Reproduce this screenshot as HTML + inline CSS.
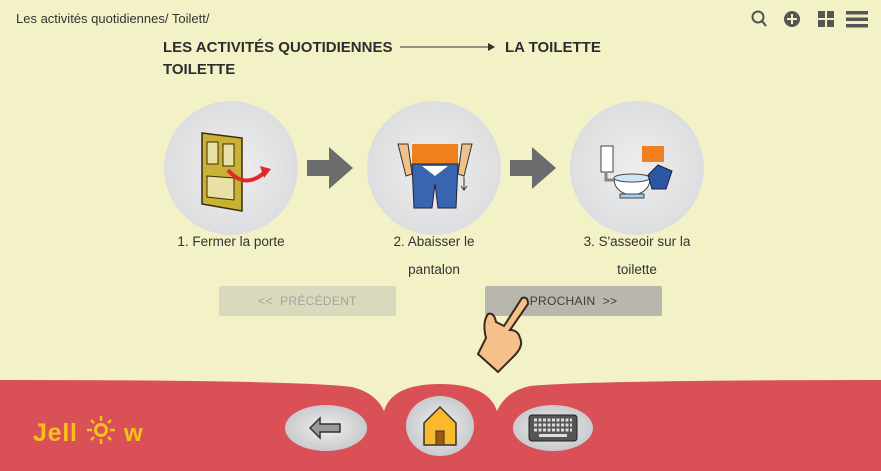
<!DOCTYPE html>
<html><head><meta charset="utf-8"><style>
body{margin:0;width:881px;height:471px;overflow:hidden;background:#f3f2c7;font-family:"Liberation Sans",sans-serif;position:relative}
.t{position:absolute;color:#333}
.c{position:absolute;width:134px;height:134px;border-radius:50%;background:radial-gradient(circle,#eeeeee 0%,#d6d7da 100%)}
.lab{position:absolute;color:#333;font-size:13.5px;text-align:center;line-height:28px}
.btn{position:absolute;top:286px;height:30px;width:177px;border-radius:2px;font-size:12px;text-align:center;line-height:30px;letter-spacing:.3px}
</style></head><body>
<div class="t" style="left:16px;top:11px;font-size:13px">Les activités quotidiennes/ Toilett/</div>
<div class="t" style="left:163px;top:39px;font-size:15px;font-weight:bold;color:#2d2d2d">LES ACTIVITÉS QUOTIDIENNES</div>
<svg style="position:absolute;left:398px;top:40px" width="100" height="14"><line x1="2" y1="7" x2="92" y2="7" stroke="#333" stroke-width="1"/><path d="M90 3 L97 7 L90 11Z" fill="#333"/></svg>
<div class="t" style="left:505px;top:39px;font-size:15px;font-weight:bold;color:#2d2d2d">LA TOILETTE</div>
<div class="t" style="left:163px;top:61px;font-size:15px;font-weight:bold;color:#2d2d2d">TOILETTE</div>
<svg style="position:absolute;left:748px;top:8px" width="125" height="22">
<circle cx="10" cy="9" r="5.5" fill="none" stroke="#555" stroke-width="2"/><line x1="14" y1="13" x2="18" y2="18" stroke="#555" stroke-width="2.2"/>
<circle cx="44" cy="11" r="8" fill="#555"/><path d="M44 6v10M39 11h10" stroke="#f3f2c7" stroke-width="2"/>
<rect x="70" y="3" width="7" height="7" fill="#555"/><rect x="79" y="3" width="7" height="7" fill="#555"/><rect x="70" y="12" width="7" height="7" fill="#555"/><rect x="79" y="12" width="7" height="7" fill="#555"/>
<rect x="98" y="3" width="22" height="3.5" fill="#555"/><rect x="98" y="9.5" width="22" height="3.5" fill="#555"/><rect x="98" y="16" width="22" height="3.5" fill="#555"/>
</svg>
<div class="c" style="left:164px;top:101px"></div>
<div class="c" style="left:367px;top:101px"></div>
<div class="c" style="left:570px;top:101px"></div>
<svg style="position:absolute;left:0;top:0" width="881" height="380">
<path d="M307 160h22v-13l24 21-24 21v-13h-22z" fill="#6b6c6e"/>
<path d="M510 160h22v-13l24 21-24 21v-13h-22z" fill="#6b6c6e"/>
<path d="M202 133 L242 138 L242 211 L202 204Z" fill="#c9b233" stroke="#3a2a10" stroke-width="1.5"/>
<rect x="207" y="142" width="11" height="22" fill="#e9e0a4" stroke="#3a2a10"/>
<rect x="223" y="144" width="11" height="22" fill="#e9e0a4" stroke="#3a2a10"/>
<path d="M207 176 L234 178 L234 200 L207 197Z" fill="#e9e0a4" stroke="#3a2a10"/>
<path d="M228 170 Q245 190 265 172" stroke="#e02a2a" stroke-width="4" fill="none"/><path d="M260 166 L271 169 L264 178Z" fill="#e02a2a"/>
<rect x="412" y="144" width="46" height="20" fill="#f07f1e"/>
<path d="M412 164 h46 l-2 44 h-18 l-3-24 -3 24 h-18z" fill="#3864b0" stroke="#223" stroke-width="1"/>
<path d="M422 166 L435 176 L448 166Z" fill="#fff"/>
<path d="M398 144 l10 0 4 30 -6 2z M472 144 l-10 0 -4 30 6 2z" fill="#f2c08a" stroke="#333" stroke-width="1"/>
<path d="M464 177v13M461 186l3 4 3-4" stroke="#333" fill="none"/>
<rect x="601" y="146" width="12" height="26" fill="#fff" stroke="#444"/>
<path d="M606 172 v8 h8" stroke="#888" stroke-width="3" fill="none"/>
<path d="M614 178 h36 q0 12-12 16 h-12 q-12-4-12-16z" fill="#fff" stroke="#444"/>
<ellipse cx="632" cy="178" rx="18" ry="4" fill="#cfe6f2" stroke="#444"/>
<rect x="620" y="194" width="24" height="4" fill="#9cd0ee" stroke="#444"/>
<path d="M642 146 h22 v16 h-22z" fill="#f07f1e"/>
<path d="M648 175 l10-10 14 6 -6 18 h-14z" fill="#2b56a6" stroke="#223"/>
</svg>
<div class="lab" style="left:164px;top:228px;width:134px">1. Fermer la porte</div>
<div class="lab" style="left:367px;top:228px;width:134px">2. Abaisser le<br>pantalon</div>
<div class="lab" style="left:570px;top:228px;width:134px">3. S'asseoir sur la<br>toilette</div>
<div class="btn" style="left:219px;background:#dad9be;color:#a4a49a">&lt;&lt;&nbsp; PRÉCÉDENT</div>
<div class="btn" style="left:485px;background:#b8b6ad;color:#3d3d3d">PROCHAIN &nbsp;&gt;&gt;</div>
<svg style="position:absolute;left:470px;top:292px" width="70" height="90"><path d="M52 6 Q58 4 58 12 L40 38 Q48 38 50 46 Q54 54 44 64 L28 80 L8 62 L16 46 Q12 30 18 22 Q24 20 26 30 L34 34 Z" fill="#f6c08a" stroke="#3a2a1a" stroke-width="2"/></svg>
<svg style="position:absolute;left:0;top:375px" width="881" height="96">
<path d="M0 5 Q300 5 352 12 Q376 18 384 36 Q392 9 440 9 Q488 9 497 36 Q506 16 530 11 Q600 5 881 5 V96 H0Z" fill="#d95057"/>
<defs><radialGradient id="g"><stop offset="0" stop-color="#f0f0f0"/><stop offset="1" stop-color="#c9cacd"/></radialGradient></defs>
<ellipse cx="326" cy="53" rx="41" ry="23" fill="url(#g)"/>
<ellipse cx="440" cy="51" rx="34" ry="30" fill="url(#g)"/>
<ellipse cx="553" cy="53" rx="40" ry="23" fill="url(#g)"/>
<path d="M310 53 l10-10 v6 h20 v8 h-20 v6z" fill="#9a9a9a" stroke="#333" stroke-width="1.5"/>
<path d="M424 48 l16-16 16 16 v22 h-32z" fill="#f8b92a" stroke="#333" stroke-width="1.5"/><rect x="436" y="56" width="8" height="14" fill="#9b5a12" stroke="#333"/>
<rect x="529" y="40" width="48" height="26" rx="3" fill="#555" stroke="#222"/>
<path d="M534 45h38M534 50h38M534 55h38" stroke="#ddd" stroke-width="3" stroke-dasharray="3 1.5"/><rect x="539" y="59" width="28" height="3" fill="#ddd"/>
<text x="33" y="66" font-family="Liberation Sans" font-weight="bold" font-size="25" fill="#f6c11d" textLength="44">Jell</text>
<circle cx="101" cy="55" r="5.5" fill="none" stroke="#f6c11d" stroke-width="3"/>
<path d="M101 41v5M101 64v5M87 55h5M110 55h5M91 45l3 3M108 62l3 3M111 45l-3 3M94 62l-3 3" stroke="#f6c11d" stroke-width="2.5"/>
<text x="124" y="66" font-family="Liberation Sans" font-weight="bold" font-size="24" fill="#f6c11d">w</text>
</svg>
</body></html>
